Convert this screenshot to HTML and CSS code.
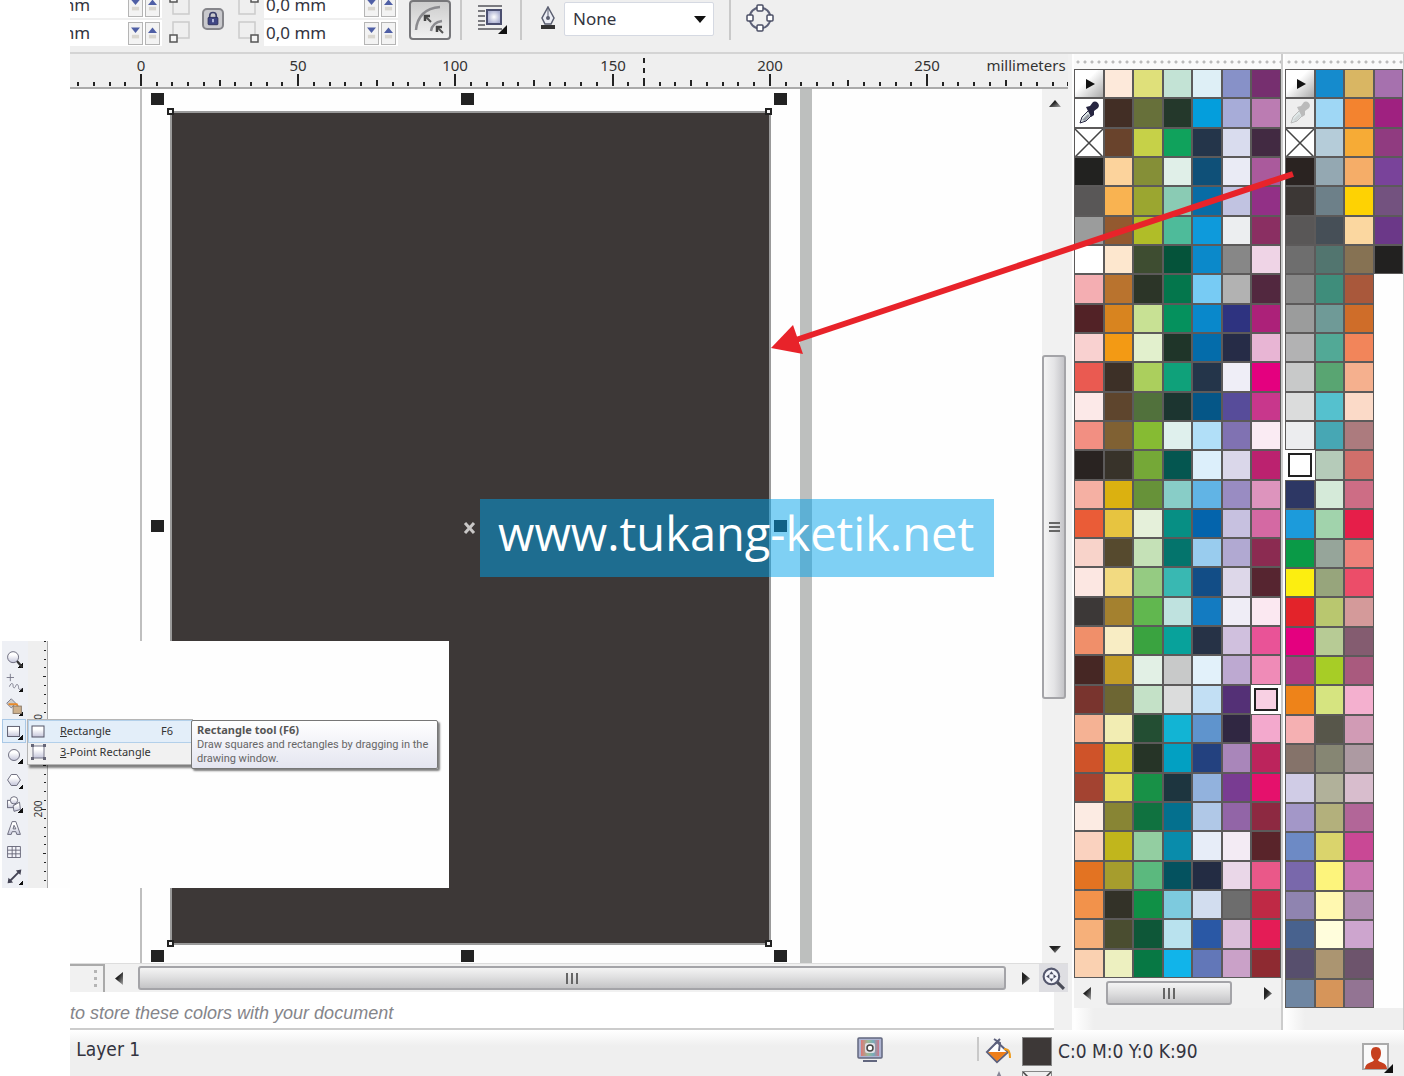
FILE: index.html
```html
<!DOCTYPE html>
<html lang="en">
<head>
<meta charset="utf-8">
<title>Drawing window</title>
<link rel="stylesheet" href="styles.css">
</head>
<body>
<svg class="defs" width="0" height="0" aria-hidden="true">
  <defs>
    <linearGradient id="glass" x1="0" y1="0" x2="0" y2="1"><stop offset="0.3" stop-color="#fff"/><stop offset="1" stop-color="#c4c5da"/></linearGradient>
    <radialGradient id="glow"><stop offset="0" stop-color="#fff"/><stop offset="1" stop-color="#a9aed0"/></radialGradient>
    <linearGradient id="ink" x1="0" y1="0" x2="1" y2="1"><stop offset="0.4" stop-color="#222"/><stop offset="1" stop-color="#aaa"/></linearGradient>
    <linearGradient id="spectrum"><stop offset="0" stop-color="#d77"/><stop offset="0.4" stop-color="#9b9"/><stop offset="0.7" stop-color="#7ab"/><stop offset="1" stop-color="#c78"/></linearGradient>
    <symbol id="down" viewBox="0 0 10 14"><path d="M0 1h10L5 7z" fill="#4f5fa5"/><path d="M1 9h8v4H1z" fill="#d9d6cf"/></symbol>
    <symbol id="up" viewBox="0 0 10 14"><path d="M0 7h10L5 1z" fill="#4f5fa5"/><path d="M1 9h8v4H1z" fill="#d9d6cf"/></symbol>
    <symbol id="dropper" viewBox="0 0 24 24"><path d="M3 22l2-6 8-8 4 4-8 8z" fill="#dfe8e8" stroke="currentColor" stroke-width="1"/><path d="M5 19l6-6 2 2-5 5z" fill="currentColor" opacity="0.4"/><path d="M9 6l4-1 3-4c3-2 8 2 5 6l-4 3 0 4-3 2z" fill="currentColor"/></symbol>
    <symbol id="none" viewBox="0 0 28 28"><path d="M0 0l28 28M28 0L0 28" stroke="#444" stroke-width="1.5"/></symbol>
    <symbol id="play" viewBox="0 0 10 10"><path d="M1 0l9 5-9 5z" fill="#111"/></symbol>
    <symbol id="arrow-left" viewBox="0 0 8 13"><path d="M8 0v13L0 6.500z" fill="url(#ink)"/></symbol>
    <symbol id="arrow-right" viewBox="0 0 8 13"><path d="M0 0v13l8-6.500z" fill="url(#ink)"/></symbol>
    <symbol id="arrow-up" viewBox="0 0 12 7"><path d="M0 7h12L6 0z" fill="url(#ink)"/></symbol>
    <symbol id="arrow-down" viewBox="0 0 12 7"><path d="M0 0h12L6 7z" fill="url(#ink)"/></symbol>
  </defs>
</svg>
<div class="app">
  <header class="toolbar">
    <div class="fields fields-cut">
      <div class="field"><input type="text" value="0,0 mm" aria-label="Top left radius"><button aria-label="Decrease"><svg><use href="#down"/></svg></button><button aria-label="Increase"><svg><use href="#up"/></svg></button></div>
      <div class="field"><input type="text" value="0,0 mm" aria-label="Bottom left radius"><button aria-label="Decrease"><svg><use href="#down"/></svg></button><button aria-label="Increase"><svg><use href="#up"/></svg></button></div>
    </div>
    <svg class="corners" viewBox="0 0 24 46" fill="none"><path d="M5-4h16v18H5zM5 22h16v16H5z" stroke="#ccc" stroke-width="1.500"/><path d="M2-5h7v7H2zM2 35h7v7H2z" fill="#f5f5f5" stroke="#555" stroke-width="1.500"/></svg>
    <button class="lock" aria-label="Edit corners together"><svg viewBox="0 0 22 22"><path d="M7 10V7a4 4 0 018 0v3" fill="none" stroke="#3c416c" stroke-width="2"/><rect x="5" y="9" width="12" height="9" rx="1" fill="#3f4684" stroke="#272b55"/><path d="M11 11v4" stroke="#c6cbe8" stroke-width="2"/></svg></button>
    <svg class="corners" viewBox="0 0 24 46" fill="none"><path d="M3-4h16v18H3zM3 22h16v16H3z" stroke="#ccc" stroke-width="1.500"/><path d="M15-5h7v7h-7zM15 35h7v7h-7z" fill="#f5f5f5" stroke="#555" stroke-width="1.500"/></svg>
    <div class="fields">
      <div class="field"><input type="text" value="0,0 mm" aria-label="Top right radius"><button aria-label="Decrease"><svg><use href="#down"/></svg></button><button aria-label="Increase"><svg><use href="#up"/></svg></button></div>
      <div class="field"><input type="text" value="0,0 mm" aria-label="Bottom right radius"><button aria-label="Decrease"><svg><use href="#down"/></svg></button><button aria-label="Increase"><svg><use href="#up"/></svg></button></div>
    </div>
    <button class="relative" aria-label="Relative corner scaling"><svg viewBox="0 0 38 38" fill="none"><path d="M5 28C6 15 14 6 29 5M20 29c1-6 4-9 11-10" stroke="#8a8a8e" stroke-width="2.500"/><path d="M15 15l5 5M27 26l5 5" stroke="#555" stroke-width="2"/><path d="M14 19v-5h5M26 30v-5h5" stroke="#444" stroke-width="2.500"/></svg></button>
    <span class="rule"></span>
    <button class="plain wrap" aria-label="Wrap text"><svg viewBox="0 0 32 32"><path d="M1 2h24M1 7h7M1 12h7M1 17h7M1 21h7M1 25h24" stroke="#55565c" stroke-width="1.500"/><rect x="10" y="6" width="14" height="14" fill="url(#glow)" stroke="#4b4f70" stroke-width="2"/><path d="M30 21v9h-9z" fill="#111"/></svg></button>
    <span class="rule"></span>
    <label class="pen" for="outline" aria-label="Outline width"><svg viewBox="0 0 16 24"><path d="M8 1l6 11-3 6H5l-3-6z" fill="#eceef5" stroke="#5a5e70" stroke-width="1.500"/><path d="M8 2v9" stroke="#5a5e70"/><circle cx="8" cy="12" r="2" fill="#5a5e70"/><path d="M1 19h14v4H1z" fill="#333"/></svg></label>
    <span class="combo"><select id="outline"><option>None</option></select><svg viewBox="0 0 12 7"><path d="M0 0h12L6 7z" fill="#111"/></svg></span>
    <span class="rule"></span>
    <button class="plain nodes" aria-label="Convert to curves"><svg viewBox="0 0 28 28" fill="none"><circle cx="14" cy="14" r="10.500" stroke="#5d6178" stroke-width="2"/><g fill="#fff" stroke="#4b4f66" stroke-width="1.500"><rect x="11" y="1" width="6" height="6" rx="1"/><rect x="11" y="21" width="6" height="6" rx="1"/><rect x="1" y="11" width="6" height="6" rx="1"/><rect x="21" y="11" width="6" height="6" rx="1"/></g></svg></button>
  </header>

  <main class="main">
    <section class="workspace">
      <svg class="ruler" id="ruler" role="img" aria-label="Horizontal ruler"></svg>
      <div class="view">
        <svg class="canvas" role="img" aria-label="Page with a dark rectangle">
          <path d="M71 0v874" stroke="#aaa" stroke-width="1.500"/>
          <path d="M730 0h12v874h-12z" fill="#bdbfbe"/>
          <rect x="101" y="23" width="599" height="832" fill="#3d3837" stroke="#9a9a9a" stroke-width="2"/>
          <g fill="#f4f4f4" stroke="#222" stroke-width="2"><path d="M98 20h5v5h-5zM696 20h5v5h-5zM98 852h5v5h-5zM696 852h5v5h-5z"/></g>
          <path d="M395 434l9 10M404 434l-9 10" stroke="#c9c7c6" stroke-width="3"/>
          <path d="M81 4h13v12H81zM391 4h13v12h-13zM704 4h13v12h-13zM81 431h13v12H81zM704 431h13v12h-13zM81 861h13v12H81zM391 861h13v12h-13zM704 861h13v12h-13z" fill="#222"/>
        </svg>
        <div class="vscroll">
          <button aria-label="Scroll up"><svg class="tri-v"><use href="#arrow-up"/></svg></button>
          <span></span><div class="thumb thumb-v"><i></i><i></i><i></i></div><span></span>
          <button aria-label="Scroll down"><svg class="tri-v"><use href="#arrow-down"/></svg></button>
        </div>
      </div>
      <div class="hbar">
        <div class="tabs"><i></i><i></i><i></i></div>
        <button class="step step-left" aria-label="Scroll left"><svg class="tri-h"><use href="#arrow-left"/></svg></button>
        <div class="thumb thumb-h"><i></i><i></i><i></i></div>
        <button class="step step-right" aria-label="Scroll right"><svg class="tri-h"><use href="#arrow-right"/></svg></button>
        <button class="navigator" aria-label="Navigator"><svg viewBox="0 0 24 24" fill="none"><path d="M15 15l7 7" stroke="#4a4c58" stroke-width="3"/><circle cx="10" cy="10" r="7.500" fill="#f3f4fa" stroke="#55586e" stroke-width="2"/><path d="M10 5l2 3H8zM10 15l2-3H8zM5 10l3-2v4zM15 10l-3-2v4z" fill="#4d5064"/></svg></button>
      </div>
      <div class="document-palette"><p>to store these colors with your document</p></div>
    </section>

    <section class="panel panel-wide" aria-label="Colour palette">
      <div class="grip"></div>
      <div class="swatches swatches-wide" id="wide"></div>
      <div class="panel-scroll">
        <button class="step step-left" aria-label="Scroll left"><svg class="tri-h"><use href="#arrow-left"/></svg></button>
        <div class="thumb thumb-h"><i></i><i></i><i></i></div>
        <button class="step step-right" aria-label="Scroll right"><svg class="tri-h"><use href="#arrow-right"/></svg></button>
      </div>
      <div class="panel-foot"></div>
    </section>
    <section class="panel panel-narrow" aria-label="Default palette">
      <div class="grip"></div>
      <div class="swatches swatches-narrow" id="narrow"></div>
      <div class="panel-foot"></div>
    </section>
  </main>

  <footer class="status">
    <p class="layer">n Layer 1</p>
    <svg class="proof" viewBox="0 0 26 26"><rect x="1" y="1" width="24" height="20" rx="1" fill="#aeb4d2" stroke="#62677f" stroke-width="1.500"/><rect x="4" y="3" width="18" height="16" fill="url(#spectrum)"/><rect x="8" y="6" width="10" height="10" rx="2" fill="#dfe0e6"/><circle cx="13" cy="11" r="3" fill="#fff" stroke="#444" stroke-width="1.500"/><path d="M6 24h14" stroke="#62677f" stroke-width="2"/></svg>
    <span class="rule"></span>
    <div class="fills">
      <svg class="bucket" viewBox="0 0 28 28"><path d="M13 5L3 15l10 10 11-10z" fill="#fff" stroke="#5c607c" stroke-width="2"/><path d="M4 15h19L13 24z" fill="#ee7f1a"/><path d="M10 2l6 4-1 8M16 2l-5 5" fill="none" stroke="#5c607c" stroke-width="2"/><path d="M20 12c5 0 6 3 6 9" fill="none" stroke="#ee9a1a" stroke-width="2"/></svg>
      <span class="chip chip-fill"></span>
      <span>C:0 M:0 Y:0 K:90</span>
      <svg class="bucket" viewBox="0 0 28 28"><path d="M15 0l4 9-4 6-4-6z" fill="#889"/></svg>
      <span class="chip"><svg><use href="#none"/></svg></span>
      <span></span>
    </div>
    <button class="plain user" aria-label="Sign in"><svg viewBox="0 0 32 32"><rect x="1" y="1" width="25" height="25" fill="#fafafa" stroke="#aaa" stroke-width="2"/><path d="M14 4c4 0 5 3 5 6s-1 5-3 7c1 3 9 2 9 9H3c0-7 8-6 9-9-2-2-3-4-3-7s1-6 5-6z" fill="#c6401f"/><path d="M31 21v9h-9z" fill="#111"/></svg></button>
  </footer>

  <svg class="pointer" aria-hidden="true"><path d="M1293 174L793 341" stroke="#e8232a" stroke-width="6"/><path d="M771 348l22-23 10 29z" fill="#e8232a"/></svg>

  <aside class="inset">
    <div class="toolbox">
      <button aria-label="Zoom tool"><svg viewBox="0 0 24 24"><path d="M15 14l6 7" stroke="#333" stroke-width="2.500"/><circle cx="11" cy="10" r="6" fill="url(#glass)" stroke="#667" /></svg></button>
      <button aria-label="Freehand tool"><svg viewBox="0 0 24 24" fill="none" stroke="#778"><path d="M8 2v8M4 6h8"/><path d="M7 16c2-5 4-4 4-1s2 3 3 0 3-1 3 2 2 2 4 1"/></svg></button>
      <button aria-label="Smart fill tool"><svg viewBox="0 0 24 24"><path d="M9 3l5 5-5 5-5-5z" fill="#ccc" stroke="#778"/><path d="M6 9h9l2 4" fill="none" stroke="#e88a2a" stroke-width="2"/><rect x="11" y="11" width="9" height="8" fill="#cdb08c" stroke="#876"/></svg></button>
      <button class="active" aria-label="Rectangle tool"><svg viewBox="0 0 24 24"><rect x="5" y="7" width="13" height="11" fill="url(#glass)" stroke="#556"/></svg></button>
      <button aria-label="Ellipse tool"><svg viewBox="0 0 24 24"><circle cx="12" cy="12" r="6" fill="url(#glass)" stroke="#667"/></svg></button>
      <button aria-label="Polygon tool"><svg viewBox="0 0 24 24"><path d="M9 6h6l4 6-4 6H9l-4-6z" fill="url(#glass)" stroke="#667"/></svg></button>
      <button aria-label="Basic shapes"><svg viewBox="0 0 24 24" fill="url(#glass)" stroke="#667"><rect x="5" y="8" width="8" height="8"/><circle cx="12" cy="8" r="4"/><path d="M11 14l7-4 1 8-7 2z"/></svg></button>
      <button aria-label="Text tool"><svg viewBox="0 0 24 24"><path d="M10 5h4l5 14h-4l-1-3h-4l-1 3H5zM12 9l-1 4h3z" fill="url(#glass)" stroke="#667"/></svg></button>
      <button aria-label="Table tool"><svg viewBox="0 0 24 24"><path d="M5 6h14v12H5zM10 6v12M14 6v12M5 10h14M5 14h14" fill="#f4f4fa" stroke="#667"/></svg></button>
      <button aria-label="Dimension tool"><svg viewBox="0 0 24 24"><path d="M7 18L18 7" stroke="#445" stroke-width="2"/><path d="M5 20l1-6 5 5zM20 5l-1 6-5-5z" fill="#445"/></svg></button>
    </div>
    <svg class="vruler" id="vruler" role="img" aria-label="Vertical ruler"></svg>
    <div class="flyout">
      <button class="active"><svg viewBox="0 0 18 18"><rect x="3" y="4" width="12" height="11" fill="url(#glass)" stroke="#556"/></svg><span><u>R</u>ectangle</span><kbd>F6</kbd></button>
      <button><svg viewBox="0 0 18 18"><path d="M4 3h11v12H4z" fill="url(#glass)" stroke="#778"/><path d="M2 1h3v3H2zM14 1h3v3h-3zM2 14h3v3H2zM14 14h3v3h-3z" fill="#667"/></svg><span><u>3</u>-Point Rectangle</span></button>
    </div>
    <div class="tooltip" role="tooltip"><strong>Rectangle tool (F6)</strong><p>Draw squares and rectangles by dragging in the drawing window.</p></div>
  </aside>

  <div class="banner">www.tukang-ketik.net</div>
</div>
<script src="app.js"></script>
</body>
</html>
```
FILE: styles.css
```css
* { box-sizing: border-box; }

body {
  margin: 0;
  background: #fff;
  color: #333440;
  font: 17px/24px "Noto Sans", sans-serif;
}

p { margin: 0; }
svg { display: block; }
.defs { position: absolute; }

button, input, select { font: inherit; color: inherit; }
button { padding: 0; border: 0; background: none; }

.app {
  position: relative;
  display: grid;
  grid-template-rows: 52px 1fr 46px;
  height: 100vh;
  min-height: 900px;
  padding-left: 70px;
  overflow: hidden;
}

/* Property bar */
.toolbar {
  display: flex;
  align-items: flex-start;
  background: #efefef;
  overflow: hidden;
}
.fields {
  display: grid;
  gap: 2px;
  width: 134px;
  height: 46px;
  align-content: end;
  margin-left: 4px;
}
.fields-cut {
  width: 92px;
  margin-left: 0;
  justify-content: end;
  overflow: hidden;
}
.field {
  display: flex;
  gap: 2px;
  align-items: center;
  height: 26px;
  padding-right: 2px;
  background: #fff;
}
.field input {
  width: 98px;
  height: 24px;
  padding: 0 0 0 2px;
  border: 0;
  background: none;
}
.field button {
  display: grid;
  place-items: center;
  width: 15px;
  height: 23px;
  border: 1px solid #b5b5b5;
  background: #f3f3f3;
}
.field button svg { width: 9px; height: 14px; }
.corners { width: 24px; height: 46px; margin-left: 6px; }
.fields + .corners { margin-right: 10px; }
.lock + .corners { margin-left: 12px; }
.lock {
  width: 22px;
  height: 22px;
  margin-top: 8px;
  border: 2px solid #85858a;
  border-radius: 5px;
  background: #c9c9cd;
}
.relative {
  width: 42px;
  height: 40px;
  margin-left: 11px;
  border: 2px solid #77777a;
  border-radius: 4px;
  background: linear-gradient(#ccc, #f1f1f1);
}
.rule { width: 2px; height: 40px; background: #c9c9c9; }
.toolbar .rule { margin-left: 9px; }
.wrap { width: 32px; margin: 4px 2px 0 15px; }
.pen { width: 16px; margin: 6px 8px 0 18px; }
.combo { display: grid; width: 150px; margin: 2px 6px 0 0; }
.combo > * { grid-area: 1 / 1; }
.combo select {
  appearance: none;
  height: 34px;
  padding: 0 8px;
  border: 1px solid #d5d9e2;
  border-radius: 2px;
  background: #fff;
}
.combo svg {
  width: 12px;
  height: 7px;
  margin-right: 8px;
  place-self: center end;
  pointer-events: none;
}
.nodes { width: 28px; margin: 4px 0 0 15px; }

/* Drawing window */
.main {
  display: grid;
  grid-template-columns: 1fr 211px 121px;
  min-height: 0;
  border-top: 2px solid #d4d4d4;
}
.workspace {
  display: grid;
  grid-template-rows: 35px 1fr 29px 38px;
  min-height: 0;
  padding-right: 4px;
  background: #f1f1f1;
}
.ruler { width: 100%; height: 35px; background: #efefef; border-bottom: 2px solid #aaa; }
.ruler text, .vruler text { fill: #333; text-anchor: middle; font-size: 15px; }
.view { display: grid; grid-template-columns: 1fr 26px; min-height: 0; }
.canvas { width: 100%; height: 100%; min-height: 0; background: #fefefe; }

.vscroll {
  display: grid;
  grid-template-rows: 25px 241fr 344fr 239fr 25px;
  padding-right: 2px;
}
.vscroll button, .step { display: grid; place-items: center; }
.vscroll button { padding: 4px 0 0 2px; }
.vscroll button:last-child { padding: 0 0 2px 2px; }
.tri-v { width: 12px; height: 7px; }
.tri-h { width: 8px; height: 13px; }
.thumb {
  display: flex;
  gap: 3px;
  justify-content: center;
  align-items: center;
  border: 2px solid #a4a4a8;
  border-radius: 3px;
}
.thumb-v { flex-direction: column; gap: 2px; background: linear-gradient(90deg, #f4f4f4, #e4e4e6 50%, #c4c4c8); }
.thumb-h { flex: 1; margin: 2px 0; background: linear-gradient(#f4f4f4, #dededf 50%, #c4c4c6); }
.thumb i { background: #666; }
.thumb-v i { width: 11px; height: 2px; }
.thumb-h i { width: 2px; height: 11px; }

.hbar { display: flex; border-top: 1px solid #ddd; }
.tabs {
  display: flex;
  flex-direction: column;
  gap: 4px;
  width: 35px;
  padding: 4px 6px 0 0;
  align-items: flex-end;
  border-top: 2px solid #aaa;
  border-right: 2px solid #aaa;
}
.tabs i { width: 3px; height: 3px; background: #b5b5b5; }
.step { width: 33px; }
.step-left { padding-right: 6px; }
.step-right { padding-left: 6px; }
.navigator { width: 29px; padding: 0 2px; background: #dedee2; }
.document-palette {
  margin-right: 14px;
  overflow: hidden;
  background: #fff;
  border-bottom: 2px solid #ccc;
  color: #85858a;
  font: italic 18px/24px "Liberation Sans", sans-serif;
  white-space: nowrap;
}
.document-palette p { padding-top: 9px; }

/* Palettes */
.panel { display: flex; flex-direction: column; min-height: 0; background: #fefefe; }
.panel-wide { padding-left: 2px; border-right: 2px solid #ccc; }
.panel-narrow { padding-left: 2px; border-right: 1px solid #ccc; }
.grip {
  height: 15px;
  flex: none;
  background: radial-gradient(circle at 4px 8px, #bbb 1px, transparent 2px) 0 0 / 7px 15px #fafafa;
}
.swatches { display: grid; flex: 1; min-height: 0; grid-auto-flow: column; }
.swatches-wide { grid-template: repeat(31, 1fr) / repeat(7, 1fr); }
.swatches-narrow { grid-template: repeat(32, 1fr) / repeat(4, 1fr); }
.swatch {
  display: grid;
  place-items: center;
  min-width: 0;
  min-height: 0;
  overflow: hidden;
  border: 1px solid #5c5a5a;
  background: #fff;
}
.swatch-menu { padding-left: 2px; background: linear-gradient(135deg, #fff 40%, #aaa); }
.swatch-menu svg { width: 10px; height: 10px; }
.swatch-dropper { color: #262540; }
.swatch-dropper svg { width: 24px; height: 24px; }
.swatches-narrow .swatch-dropper { color: #bbb; background: #eee; }
.swatch-none svg { width: 28px; height: 28px; }
.swatch-current { border: 2px solid #222; outline: 3px solid #fff; outline-offset: 0; margin: 3px; }
.panel-scroll { display: flex; height: 30px; padding: 1px 0; background: #f1f1f1; }
.panel-scroll .thumb { flex: none; width: 126px; margin-right: auto; }
.panel-scroll .step-left { width: 32px; }
.panel-foot { height: 22px; flex: none; background: linear-gradient(90deg, #fff, #efefef 20px); }

/* Status bar */
.status {
  display: flex;
  align-items: flex-start;
  padding-top: 7px;
  overflow: hidden;
  background: linear-gradient(#fff, #efefef 16px);
  font-family: "DejaVu Sans Condensed", "DejaVu Sans", sans-serif;
  font-size: 19px;
}
.layer { flex: 1; overflow: hidden; text-indent: -10px; white-space: nowrap; }
.proof { width: 26px; height: 26px; margin-right: 94px; }
.status .rule { height: 24px; }
.fills {
  display: grid;
  grid-template-columns: 28px 30px 300px;
  gap: 5px 10px;
  margin-left: 5px;
}
.bucket { width: 28px; height: 28px; }
.fills > :nth-child(3) { margin-left: -4px; line-height: 28px; }
.chip { height: 29px; border: 1px solid #888; overflow: hidden; }
.chip svg { width: 28px; height: 28px; }
.chip-fill { background: #3d3837; }
.user { width: 32px; margin: 6px 10px 0 0; }

/* Layers over the window */
.pointer { position: absolute; inset: 0; width: 100%; height: 100%; pointer-events: none; }
.banner {
  position: absolute;
  left: 480px;
  top: 499px;
  padding: 2px 20px 12px 18px;
  background: rgba(0, 161, 233, 0.5);
  color: #fff;
  font: 47px/64px "Open Sans", sans-serif;
}
.inset {
  position: absolute;
  left: 0;
  top: 641px;
  display: flex;
  width: 449px;
  height: 247px;
  padding-left: 2px;
  background: #fefefe;
  color: #333;
  font: 11px/14px "Noto Sans", sans-serif;
}
.toolbox {
  display: flex;
  flex-direction: column;
  width: 26px;
  padding: 6px 2px 0 0;
  background: #eef0f5;
}
.toolbox button {
  flex: 1;
  min-height: 0;
  border: 1px solid transparent;
  background: linear-gradient(135deg, transparent 50%, #111 50%) right 2px bottom 2px / 5px 5px no-repeat;
}
.toolbox button:nth-child(8), .toolbox button:nth-child(9) { background: none; }
.toolbox .active { border-color: #a9c8e6; background-color: #e3eef9; }
.toolbox svg { width: 22px; height: 22px; }
.vruler { width: 20px; height: 247px; background: #efefef; border-right: 1px solid #aaa; }
.vruler text { font-size: 10px; }
.flyout {
  position: absolute;
  left: 27px;
  top: 78px;
  width: 166px;
  padding: 1px;
  border: 1px solid #b5b5b5;
  background: #f1f1f1;
  box-shadow: 2px 3px 2px rgba(0, 0, 0, 0.5);
}
.flyout button {
  display: grid;
  grid-template-columns: 18px 1fr auto;
  column-gap: 13px;
  align-items: center;
  width: 100%;
  height: 21px;
  padding: 0 18px 2px 0;
  text-align: left;
}
.flyout .active { background: #e3eef9; outline: 1px solid #b3d0ea; }
.flyout kbd { font: inherit; }
.tooltip {
  position: absolute;
  left: 191px;
  top: 79px;
  width: 247px;
  padding: 1px 2px 2px 5px;
  border: 1px solid #777;
  border-radius: 2px;
  background: linear-gradient(#fff, #e4e5f0);
  box-shadow: 2px 2px 2px rgba(0, 0, 0, 0.5);
  color: #666;
}
.tooltip strong { display: block; line-height: 16px; color: #555; }
.tooltip p { font-family: Roboto, sans-serif; }
```
FILE: app.js
```js
// Tools at the head of each palette, then its colours, one string per column.
const head = ["menu", "dropper", "none"];
const wide = [
  "222220 595757 9b9c9c ffffff f4aeb2 522226 f9d1d0 ea5a51 fce9e8 f28f82 292321 f5b0a3 ea5c37 f8d3ca fce7e2 3c3837 f08f6a 462724 79342e f5b294 cf5329 a34331 fcebe3 fad2bf e37322 f2924b f6b07a fad1b1",
  "fde9da 422e25 69432c fcd39c f9b351 93592f fde7ce b9732e d8841f f39a14 3d3027 5e452d 806133 38332a dbb110 e7c440 564a2e f2da81 a4812f f8edc4 c39d26 6d6633 f2edb3 d6cc32 e6dc5b 888534 c1b61c a69d2d 333228 4a4d30 edf0c0",
  "dfe07a 67703a c6d148 858f37 9ba630 b0bd28 3e4d31 2c3528 c8e194 e2f0cd abcf5d 51713c 86bb33 75a837 679239 e5f0da c5e1b7 95cb82 61b74f 3aa340 e2f0e5 c4e1c7 234e33 263427 189147 107240 93cea1 5bb97e 109046 0e5738 077844",
  "c3e3d5 24382b 10a25c e0efe8 8acbb4 4ebb9a 05533a 04764c 05915d 1f3529 0fa17a 1c3530 dff0ed 045650 88cdc7 078f84 04746c 39b8b2 bfe2df 08a29b c8c9c9 dbdcdc 12b4d4 02a0c2 1d353f 04708e 098cab 04525f 7dcade b9e2ee 11b4ea",
  "deeff6 049edc 24354a 0f5078 086ca5 0e9adb 0b89ca 77cbf4 0988cb 046caa 24354a 055687 b1dff8 dceffb 61b4e5 0464ac 99ccee 124d86 137bc1 263246 e2f1fa c2dff4 5f94cd 23417f 92b2dd b0c8e7 e7edf8 232c43 d2ddef 2a58a5 6277b8",
  "8791c8 a7acd8 d9dcee eaebf5 c1c3e1 eceef0 878787 b2b2b2 2e3380 262c47 efeef7 574c9a 8072b2 dad7ea 998cc2 c7c1e0 b1a9d2 ddd7e9 efedf6 d0c0de bda9d1 543076 302742 a986ba 793c92 9265a7 f3ebf4 ead7e8 6d6d6d dabdd9 caa1c8",
  "762f6f bb7cb2 422a42 aa5a9c 923086 8a2f62 efd4e6 52283f ac2179 e8b5d4 e4007f c8378c faebf3 bb226f dd94bd d469a3 8b2b51 562530 fbe8f1 e95397 ef8bb7 *f8d0e3 f3a9cd bc245c e5116c 8d2941 59242a ea5889 bf2945 e41c56 8e2a31"
];
const narrow = [
  "2a2321 3c3735 595757 6e6e6e 878787 9b9c9c b2b2b3 c8c9c9 dbdcdc ecedef *ffffff 2d3764 1c9bdb 0a9a47 fcee10 e3232a e4007f ac3c80 ee8319 f5b0b2 85736a d0cce6 a397c8 6d8ac5 7968ab 8f84b0 48628e 574f6d 6f86a2",
  "158bcd 9fd7f5 b5ccd9 94a8b2 6d8089 464f57 52756f 3f8d7b 6f9a97 52a996 59a572 55c1ce 47a7b4 b5cbb9 d5ead9 a1d3ac 96a59a 97a57c b9c76f b7cb95 a7cd26 d6e480 57564a 868673 b1b19a b3b07c dad46c fdf47c fff8b0 fffddc ab9571 d6955a",
  "d9b663 f3832f f6ab36 f5ad68 fed203 fbd7a0 867253 a9583b cf6d29 f2855a f5b08e fbdac8 ac7b7e d06f6b cd6d85 e61e49 ee817a ec4d69 d49a9a 845c70 a95a7e f4b0cf d19bb5 ad9aa2 d8bdcd b26698 c94895 ca77b1 b18db2 cda5ce 6d546c 937493",
  "a671ae 9f2180 903b80 79439a 73527f 6b3888 222120"
];

function fill(id, columns) {
  const box = document.getElementById(id);
  const icons = { menu: "play", dropper: "dropper", none: "none" };
  for (const name of head) {
    box.insertAdjacentHTML("beforeend",
      `<button class="swatch swatch-${name}" aria-label="${name}"><svg><use href="#${icons[name]}"/></svg></button>`);
  }
  for (const colour of columns.join(" ").split(" ")) {
    const current = colour[0] === "*";
    const hex = "#" + colour.replace("*", "");
    box.insertAdjacentHTML("beforeend",
      `<button class="swatch${current ? " swatch-current" : ""}" aria-label="${hex}" style="background:${hex}"></button>`);
  }
}
fill("wide", wide);
fill("narrow", narrow);

// Horizontal ruler: a tick every 5 mm, a number every 50 mm.
let marks = "";
for (let i = -4; i <= 59; i++) {
  const x = Math.round(70 + i * 15.72);
  const top = i % 10 === 0 ? 20 : i % 5 === 0 ? 26 : 28;
  marks += `<rect x="${x}" y="${top}" width="2" height="${32 - top}" fill="#222"/>`;
  if (i % 10 === 0) marks += `<text x="${x + 1}" y="17">${i * 5}</text>`;
}
marks += '<path d="M574 4v28" stroke="#222" stroke-width="2" stroke-dasharray="5 5"/><text x="956" y="17">millimeters</text>';
document.getElementById("ruler").innerHTML = marks;

// Vertical ruler in the toolbox view.
let ticks = "";
for (let i = -19; i <= 8; i++) {
  const y = Math.round(168 + i * 8.85);
  const w = i % 10 === 0 ? 5 : i % 5 === 0 ? 3 : 2;
  ticks += `<rect x="${18 - w}" y="${y}" width="${w}" height="1" fill="#222"/>`;
}
ticks += '<text transform="translate(14 76) rotate(-90)">0</text><text transform="translate(14 168) rotate(-90)">200</text>';
document.getElementById("vruler").innerHTML = ticks;
```
